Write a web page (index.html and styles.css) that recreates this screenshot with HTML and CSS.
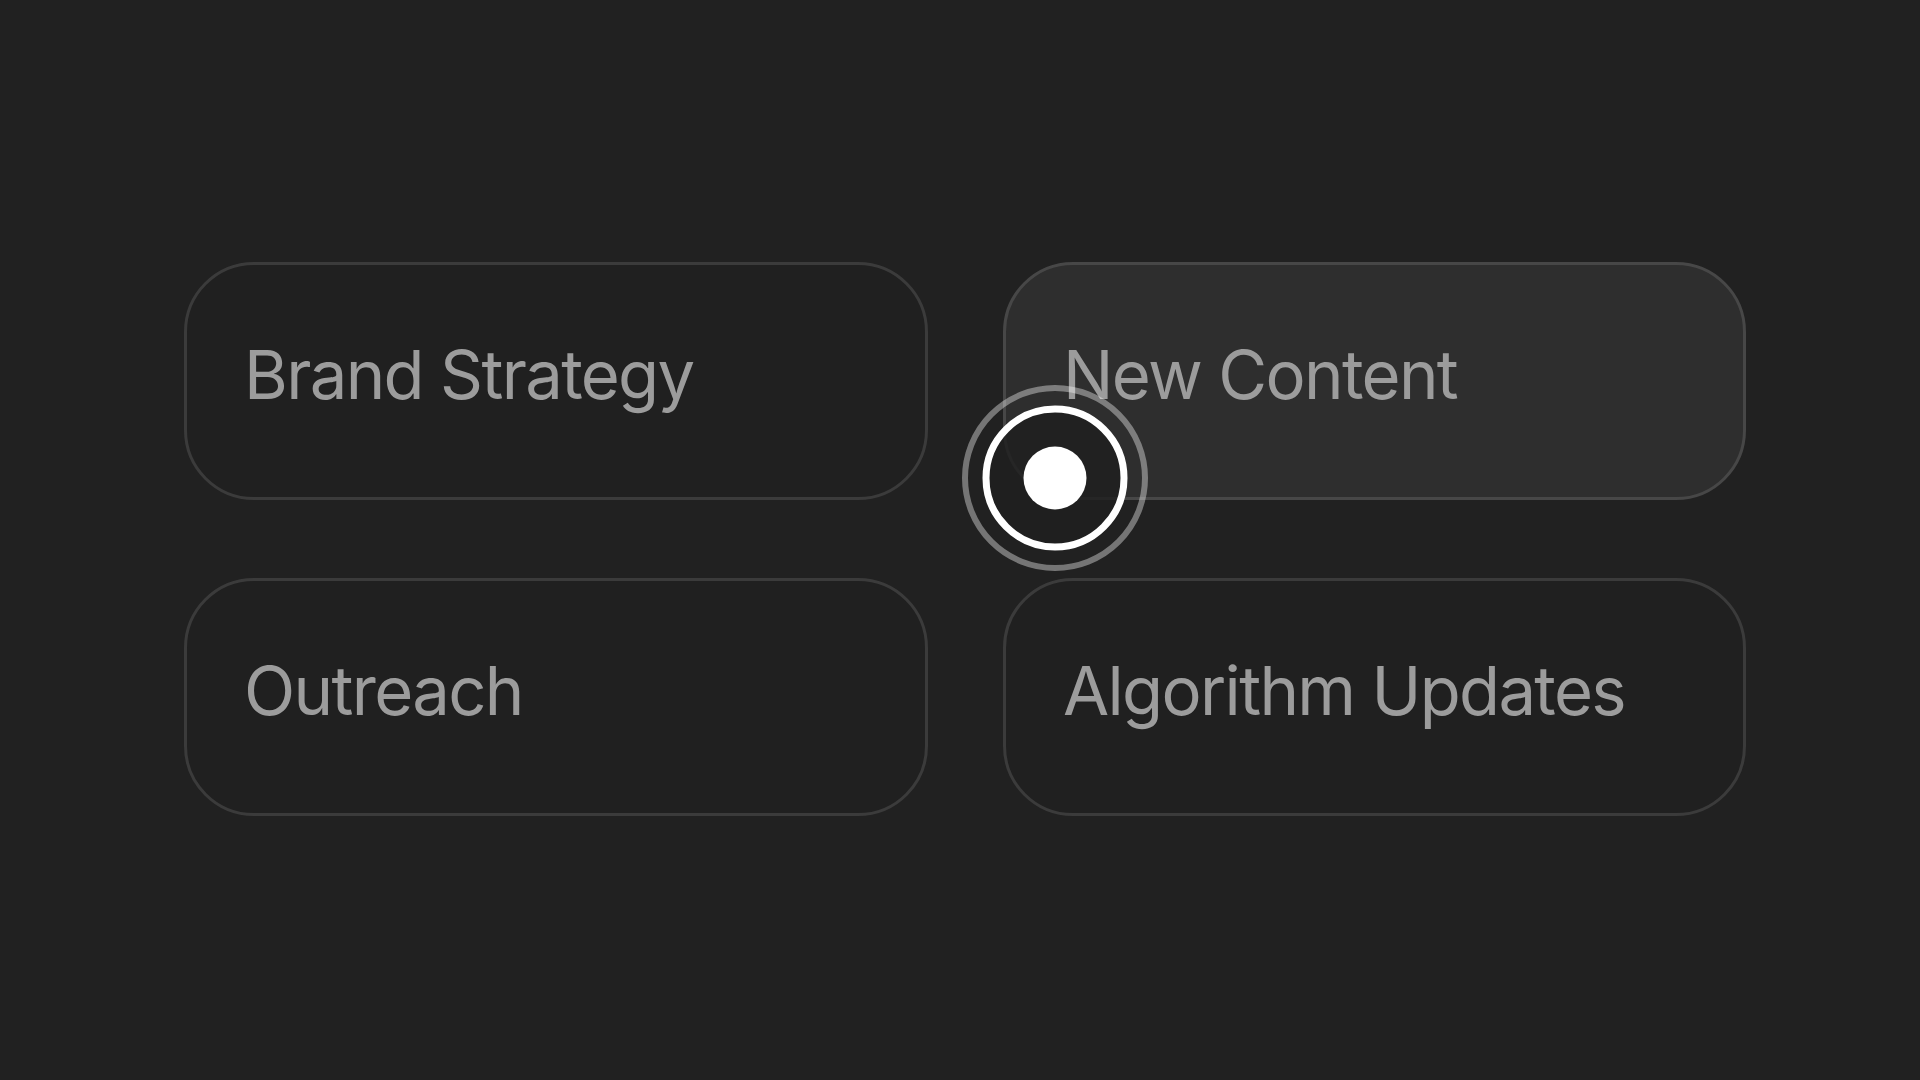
FILE: index.html
```html
<!DOCTYPE html>
<html lang="en">
<head>
<meta charset="utf-8">
<title>Topics</title>
<link rel="stylesheet" href="styles.css">
</head>
<body>
<main class="stage">
  <div class="grid">
    <div class="card"><span class="label">Brand Strategy</span></div>
    <div class="card card--active"><span class="label">New Content</span></div>
    <div class="card"><span class="label">Outreach</span></div>
    <div class="card"><span class="label">Algorithm Updates</span></div>
  </div>
  <svg class="cursor" width="200" height="200" viewBox="0 0 200 200" aria-hidden="true">
    <circle cx="100" cy="100" r="90" fill="none" stroke="rgba(255,255,255,0.38)" stroke-width="6"/>
    <circle cx="100" cy="100" r="69" fill="rgba(30,30,30,0.82)" stroke="#ffffff" stroke-width="7"/>
    <circle cx="100" cy="100" r="31.5" fill="#ffffff"/>
  </svg>
</main>
</body>
</html>
```

FILE: styles.css
```css
html, body {
  margin: 0;
  padding: 0;
  background: #212121;
}

.stage {
  position: relative;
  width: 1920px;
  height: 1080px;
  overflow: hidden;
}

.grid {
  display: grid;
  grid-template-columns: 744px 743px;
  grid-auto-rows: 238px;
  column-gap: 75px;
  row-gap: 78px;
  padding: 262px 0 0 184px;
}

.card {
  box-sizing: border-box;
  display: flex;
  align-items: center;
  padding: 0 0 14px 57px;
  border: 3px solid #3b3b3b;
  border-radius: 70px;
  background: #202020;
}

.card--active {
  background: #2e2e2e;
  border-color: #474747;
}

.label {
  font-family: Inter, "Liberation Sans", sans-serif;
  font-size: 67px;
  font-weight: 400;
  letter-spacing: -0.025em;
  color: #9c9c9c;
  line-height: 1;
}

.cursor {
  position: absolute;
  left: 955px;
  top: 378px;
}
```
